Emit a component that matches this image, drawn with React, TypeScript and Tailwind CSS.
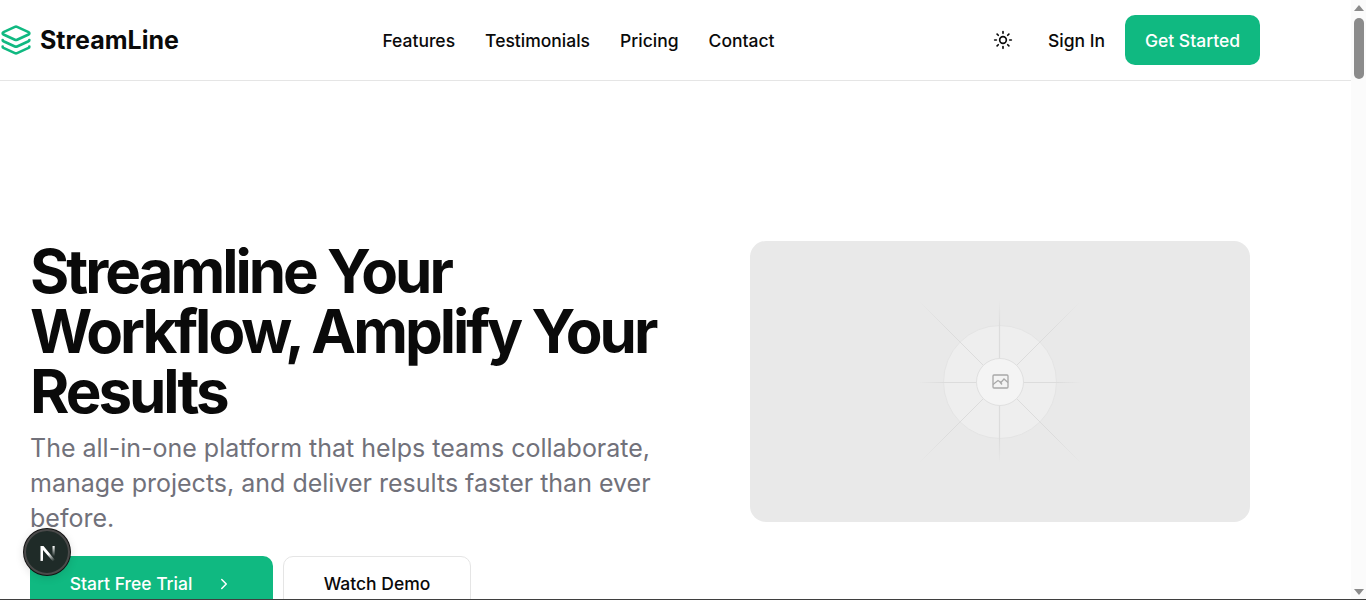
import { ChevronRight, Layers, Sun } from 'lucide-react';

const NAV_LINKS = ['Features', 'Testimonials', 'Pricing', 'Contact'];

function Placeholder() {
  return (
    <div className="mt-40 flex h-[281px] w-[500px] shrink-0 items-center justify-center rounded-2xl bg-[#e9e9e9]">
      <div className="relative h-[180px] w-[180px]">
        <svg width="180" height="180" viewBox="0 0 180 180" fill="none" className="absolute inset-0">
          <defs>
            <radialGradient id="ray" gradientUnits="userSpaceOnUse" cx="90" cy="90" r="82">
              <stop offset="0.7" stopColor="#dcdcdc" />
              <stop offset="1" stopColor="#dcdcdc" stopOpacity="0" />
            </radialGradient>
            <radialGradient id="diag" gradientUnits="userSpaceOnUse" cx="90" cy="90" r="115">
              <stop offset="0.65" stopColor="#dcdcdc" />
              <stop offset="1" stopColor="#dcdcdc" stopOpacity="0" />
            </radialGradient>
          </defs>
          <circle cx="90" cy="90" r="56.5" fill="#eeeeee" stroke="#e4e4e4" />
          <g stroke="url(#ray)" strokeWidth="1.2">
            <path d="M89.5 8V172" />
            <path d="M8 90.5H172" />
          </g>
          <g stroke="url(#diag)">
            <path d="M10 10L170 170" />
            <path d="M170 10L10 170" />
          </g>
        </svg>
        <div className="absolute left-[66px] top-[66px] flex h-12 w-12 items-center justify-center rounded-full border border-[#e0e0e0] bg-[#f4f4f4]">
          <svg width="17" height="15" viewBox="0 0 17 15" fill="none" stroke="#a8a8a8" strokeWidth="1.3">
            <rect x="1" y="1" width="15" height="13" rx="1" />
            <path d="M1 10.5L6 6.5L9 8.5L12 5L16 8.5" />
            <path d="M8 8L10 10.5" />
          </svg>
        </div>
      </div>
    </div>
  );
}

export default function App() {
  return (
    <div className="flex h-[600px] w-full overflow-hidden border-b border-[#3f3f3f] bg-white font-['Inter',sans-serif] text-[#0a0a0a]">
      <div className="min-w-0 flex-1">
        {/* Header */}
        <header className="flex h-[81px] items-center justify-between border-b border-[#e5e5e5] pr-[91px]">
          <div className="flex items-center gap-2">
            <Layers size={32} strokeWidth={2} className="text-[#10b981]" />
            <span className="pt-0.5 text-[25px] font-bold">StreamLine</span>
          </div>
          <nav className="flex items-center gap-[30px] pt-0.5 pr-[5px] text-[17.5px] font-medium">
            {NAV_LINKS.map((link) => (
              <a key={link}>{link}</a>
            ))}
          </nav>
          <div className="flex items-center gap-5">
            <button className="flex h-10 w-10 items-center justify-center">
              <Sun size={20} />
            </button>
            <a className="ml-[5px] pt-0.5 text-[17.5px] font-medium">Sign In</a>
            <button className="h-[50px] w-[135px] rounded-[10px] bg-[#10b981] pt-0.5 text-[17.5px] font-medium text-white">
              Get Started
            </button>
          </div>
        </header>

        {/* Hero */}
        <main className="flex gap-20 pl-[30px]">
          <div className="w-[640px] shrink-0 pt-40">
            <h1 className="text-6xl leading-[60px] font-bold tracking-tighter">
              Streamline Your Workflow, Amplify Your Results
            </h1>
            <p className="mt-2.5 text-[25px] leading-[35px] text-[#71717a]">
              The all-in-one platform that helps teams collaborate, manage projects, and deliver results faster than ever before.
            </p>
            <div className="mt-5 flex gap-2.5">
              <button className="flex h-14 w-[243px] items-center justify-center gap-[23px] rounded-[10px] bg-[#10b981] text-[17.5px] font-medium text-white">
                Start Free Trial
                <ChevronRight size={18} />
              </button>
              <button className="h-14 w-[188px] rounded-[10px] border border-[#e5e5e5] text-[17.5px] font-medium">
                Watch Demo
              </button>
            </div>
          </div>
          <Placeholder />
        </main>
      </div>

      {/* Page scrollbar */}
      <div className="flex w-[15px] shrink-0 flex-col items-center bg-[#fbfbfb]">
        <div className="mt-[5px] h-0 w-0 border-x-[5px] border-b-[6px] border-x-transparent border-b-[#8b8b8b]" />
        <div className="mt-[7px] h-[61px] w-[10px] rounded-full bg-[#8b8b8b]" />
        <div className="mt-auto mb-[4px] h-0 w-0 border-x-[5px] border-t-[6px] border-x-transparent border-t-[#8b8b8b]" />
      </div>

      {/* Dev indicator */}
      <div className="fixed bottom-[25px] left-6 flex h-[46px] w-[46px] items-center justify-center rounded-full border-2 border-[#4a4a4a] bg-[#1f2b28] shadow-[0_0_0_1px_#111,0_2px_10px_rgba(0,0,0,0.15)]">
        <svg width="18" height="17" viewBox="0 0 18 17" fill="none" className="mt-0.5 ml-0.5">
          <defs>
            <linearGradient id="nBar" gradientUnits="userSpaceOnUse" x1="4" y1="2" x2="15" y2="16">
              <stop offset="0.5" stopColor="#ffffff" />
              <stop offset="1" stopColor="#ffffff" stopOpacity="0" />
            </linearGradient>
            <linearGradient id="nRight" x1="0" y1="0" x2="0" y2="1">
              <stop offset="0" stopColor="#ffffff" />
              <stop offset="0.85" stopColor="#ffffff" stopOpacity="0" />
            </linearGradient>
          </defs>
          <path d="M1.5 1V16H4V5L14 16.5L16 15L4.5 1H1.5Z" fill="url(#nBar)" />
          <rect x="13.5" y="1" width="2.2" height="12" fill="url(#nRight)" />
        </svg>
      </div>
    </div>
  );
}
